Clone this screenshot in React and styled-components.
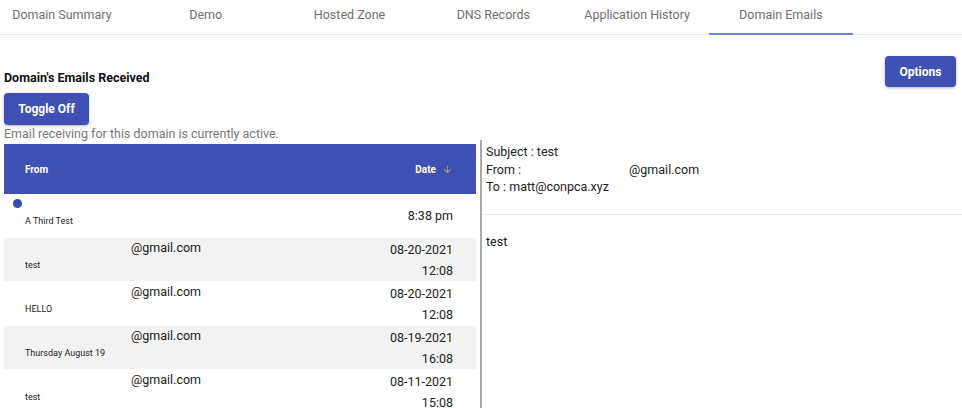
import React from 'react';
import styled, { createGlobalStyle } from 'styled-components';

const GlobalStyle = createGlobalStyle`
  body {
    margin: 0;
    background: #fff;
    font-family: Roboto, "Liberation Sans", Arial, sans-serif;
    color: #222;
    overflow: hidden;
  }
`;

const Page = styled.div`
  width: 962px;
  height: 408px;
  overflow: hidden;
`;

const TabBar = styled.div`
  display: flex;
  height: 35px;
  border-bottom: 1px solid #e8e8e8;
  box-sizing: border-box;
  margin-left: -10px;
`;

const Tab = styled.div`
  width: 143.8px;
  flex: none;
  box-sizing: border-box;
  text-align: center;
  font-size: 12.5px;
  line-height: 30px;
  color: #707070;
  border-bottom: 2px solid ${(p) => (p.$active ? '#7481cc' : 'transparent')};
  margin-bottom: -1px;
`;

const TopRow = styled.div`
  display: flex;
  justify-content: space-between;
  align-items: flex-start;
  padding: 0 6px 0 4px;
`;

const LeftHead = styled.div`
  display: flex;
  flex-direction: column;
  align-items: flex-start;
`;

const Title = styled.h4`
  margin: 36px 0 0;
  font-size: 12.5px;
  font-weight: 700;
  line-height: 14px;
  color: #111;
`;

const Button = styled.button`
  border: none;
  border-radius: 4px;
  background: #3f51b5;
  color: #fff;
  font-family: inherit;
  font-size: 12px;
  font-weight: 700;
  height: ${(p) => p.$h}px;
  width: ${(p) => p.$w}px;
  margin-top: ${(p) => p.$top}px;
  padding: 0;
  box-shadow: 0 1px 3px rgba(0, 0, 0, 0.3);
`;

const Status = styled.div`
  font-size: 12.5px;
  line-height: 14px;
  color: #777;
  margin-top: 2px;
`;

const Split = styled.div`
  display: grid;
  grid-template-columns: 480px 1fr;
  margin-top: 3px;
`;

const Table = styled.div`
  margin: 0 4px;
`;

const HeadRow = styled.div`
  height: 50px;
  background: #3f51b5;
  display: flex;
  align-items: center;
  justify-content: space-between;
  padding: 0 23px 0 21px;
  color: #fff;
  font-size: 10px;
  font-weight: 700;
`;

const DateHead = styled.span`
  display: flex;
  align-items: center;
  gap: 6px;
`;

const Row = styled.div`
  height: 44px;
  box-sizing: border-box;
  display: grid;
  grid-template-columns: 106px 1fr auto;
  padding: 0 23px 0 21px;
  background: ${(p) => (p.$shade ? '#f2f2f2' : '#fff')};
  border-bottom: 1px solid #fff;
  position: relative;
`;

const Sender = styled.div`
  display: flex;
  flex-direction: column;
`;

const Dot = styled.span`
  position: absolute;
  left: 9px;
  top: 5px;
  width: 9px;
  height: 9px;
  border-radius: 50%;
  background: #3949ab;
`;

const Subject = styled.div`
  font-size: 9px;
  color: #222;
  margin-top: 22px;
  line-height: 10px;
`;

const Email = styled.div`
  font-size: 12.5px;
  line-height: 20px;
  color: #222;
`;

const DateCell = styled.div`
  align-self: center;
  text-align: right;
  font-size: 12.5px;
  line-height: 21px;
  color: #222;
`;

const Preview = styled.div`
  border-left: 2px solid #a9a9a9;
  min-height: 270px;
  margin-top: -4px;
  padding-top: 3px;
`;

const Meta = styled.div`
  padding: 0 0 0 4px;
  font-size: 12.5px;
  line-height: 17.5px;
  height: 71px;
  border-bottom: 1px solid #ececec;
`;

const Gap = styled.span`
  display: inline-block;
  width: ${(p) => p.$w}px;
`;

const Body = styled.div`
  padding: 19px 0 0 4px;
  font-size: 12.5px;
`;

const ArrowDown = () => (
  <svg width="11" height="11" viewBox="0 0 24 24" aria-hidden="true">
    <path fill="#b0a46c" d="M20 12l-1.41-1.41L13 16.17V4h-2v12.17l-5.58-5.59L4 12l8 8 8-8z" />
  </svg>
);

const tabs = ['Domain Summary', 'Demo', 'Hosted Zone', 'DNS Records', 'Application History', 'Domain Emails'];

const emails = [
  { subject: 'A Third Test', from: '', date: ['8:38 pm'], unread: true },
  { subject: 'test', from: '@gmail.com', date: ['08-20-2021', '12:08'] },
  { subject: 'HELLO', from: '@gmail.com', date: ['08-20-2021', '12:08'] },
  { subject: 'Thursday August 19', from: '@gmail.com', date: ['08-19-2021', '16:08'] },
  { subject: 'test', from: '@gmail.com', date: ['08-11-2021', '15:08'] },
];

const App = () => (
  <Page>
    <GlobalStyle />
    <TabBar>
      {tabs.map((t) => (
        <Tab key={t} $active={t === 'Domain Emails'}>{t}</Tab>
      ))}
    </TabBar>
    <TopRow>
      <LeftHead>
        <Title>Domain's Emails Received</Title>
        <Button $w={85} $h={32} $top={8}>Toggle Off</Button>
        <Status>Email receiving for this domain is currently active.</Status>
      </LeftHead>
      <Button $w={71} $h={31} $top={21}>Options</Button>
    </TopRow>
    <Split>
      <Table>
        <HeadRow>
          <span>From</span>
          <DateHead>Date<ArrowDown /></DateHead>
        </HeadRow>
        {emails.map((e, i) => (
          <Row key={i} $shade={i % 2 === 1}>
            {e.unread && <Dot />}
            <Sender>
              <Subject>{e.subject}</Subject>
            </Sender>
            <Email>{e.from}</Email>
            <DateCell>
              {e.date.map((d) => (
                <div key={d}>{d}</div>
              ))}
            </DateCell>
          </Row>
        ))}
      </Table>
      <Preview>
        <Meta>
          <div>Subject : test</div>
          <div>From :<Gap $w={108} />@gmail.com</div>
          <div>To : matt@conpca.xyz</div>
        </Meta>
        <Body>test</Body>
      </Preview>
    </Split>
  </Page>
);

export default App;
